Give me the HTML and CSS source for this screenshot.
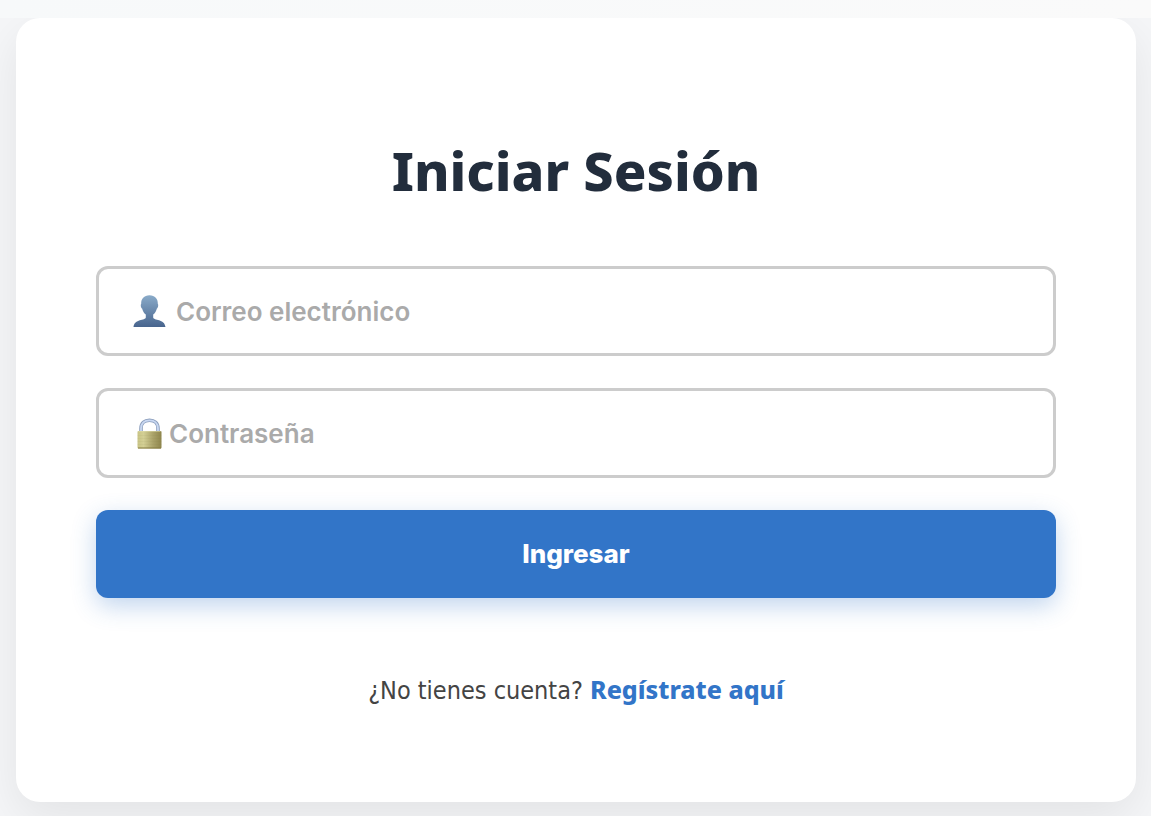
FILE: index.html
```html
<!DOCTYPE html>
<html lang="es">
<head>
<meta charset="utf-8">
<meta name="viewport" content="width=device-width, initial-scale=1">
<title>Iniciar Sesión</title>
<link rel="stylesheet" href="styles.css">
</head>
<body>
<header class="topbar"></header>
<main class="page">
  <form class="card">
    <h1 class="title">Iniciar Sesión</h1>
    <label class="field">
      <svg class="icon" viewBox="0 0 34 34" role="img" aria-label="Usuario">
        <defs><linearGradient id="person" x1="0" y1="0" x2="0" y2="1"><stop offset="0" stop-color="#8aabc9"/><stop offset="1" stop-color="#48658e"/></linearGradient></defs>
        <path fill="url(#person)" d="M16.500 1.200C11 1.200 8 4.800 8.200 9.700C7.400 10.500 7.800 13.900 9.100 14.400C9.700 17 11 19 12.800 20.500V23.400C12.500 26.600 1.200 24.600 .5 33H32.500C31.800 24.600 20.500 26.600 20.200 23.400V20.500C22 19 23.300 17 23.900 14.400C25.200 13.900 25.600 10.500 24.800 9.700C25 4.800 22 1.200 16.500 1.200Z"/>
      </svg>
      <input class="input input-email" type="email" placeholder="Correo electrónico" aria-label="Correo electrónico">
    </label>
    <label class="field">
      <svg class="icon" viewBox="0 0 34 34" role="img" aria-label="Candado">
        <defs>
          <linearGradient id="brass" x1="0" y1="0" x2="1" y2="0"><stop offset="0" stop-color="#c9c486"/><stop offset=".25" stop-color="#d3cf94"/><stop offset=".65" stop-color="#aaa269"/><stop offset="1" stop-color="#8e854c"/></linearGradient>
        </defs>
        <path fill="none" stroke="#8d9fbd" stroke-width="3.600" d="M8 17V12.500C8 7.200 11.500 4.300 16.500 4.300S25 7.200 25 12.500V17"/>
        <path fill="none" stroke="#c9d8f2" stroke-width="1.800" d="M8 17V12.500C8 7.200 11.500 4.300 16.500 4.300S25 7.200 25 12.500V17"/>
        <rect x="4.500" y="15" width="24" height="17.500" rx="1" fill="url(#brass)"/>
        <path stroke="#77713d" stroke-opacity=".06" d="M4.500 19.500H28.500M4.500 22.500H28.500M4.500 25.500H28.500M4.500 28.500H28.500"/>
        <path stroke="#e1dfae" stroke-opacity=".5" d="M5.500 15.500H27.500"/><path stroke="#857b40" d="M5 32H28"/>
      </svg>
      <input class="input" type="password" placeholder="Contraseña" aria-label="Contraseña">
    </label>
    <button class="submit" type="submit">Ingresar</button>
    <p class="signup">¿No tienes cuenta? <a class="link" href="#registro">Regístrate aquí</a></p>
  </form>
</main>
</body>
</html>
```
FILE: styles.css
```css
* { box-sizing: border-box; }
body {
  display: flex;
  flex-direction: column;
  min-height: 100vh;
  margin: 0;
  background: #f5f6f8;
  font-family: Tahoma, "Noto Sans", sans-serif;
}
.topbar {
  height: 18px;
  background: linear-gradient(90deg, #f7f9fa, #fafafa);
}
.page {
  flex: 1;
  padding: 0 15px 14px 16px;
  overflow: hidden;
}
.card {
  display: flex;
  flex-direction: column;
  padding: 112px 80px 92px;
  border-radius: 24px;
  background: #fff;
  box-shadow: 0 16px 48px rgba(0, 0, 0, .08);
}
.title {
  margin: 0 0 56px;
  color: #222d3c;
  font-size: 54px;
  font-weight: 800;
  line-height: 80px;
  text-align: center;
}
.field {
  display: flex;
  align-items: center;
  height: 90px;
  margin-bottom: 32px;
  padding: 0 34px;
  border: 3px solid #ccc;
  border-radius: 12px;
  background: #fff;
}
.icon {
  flex: none;
  width: 34px;
  height: 34px;
}
.input {
  flex: 1;
  min-width: 0;
  padding: 2px 0 0 2px;
  border: 0;
  outline: 0;
  background: transparent;
  color: #333;
  font: 600 26px/36px Inter, sans-serif;
}
.input-email { padding-left: 9px; }
.input::placeholder { color: #aaa; opacity: 1; }
.submit {
  height: 88px;
  padding: 0;
  border: 0;
  border-radius: 12px;
  background: #3275c8;
  box-shadow: 0 8px 24px rgba(50, 117, 200, .3);
  color: #fff;
  font: 800 26px/36px Inter, sans-serif;
}
.signup {
  margin: 72px 0 0;
  color: #444;
  font-family: Tahoma, "DejaVu Sans Condensed", "Noto Sans", sans-serif;
  font-size: 25px;
  line-height: 38px;
  text-align: center;
}
.link {
  color: #3275c8;
  font-family: Tahoma, "Noto Sans", sans-serif;
  font-weight: 800;
  text-decoration: none;
}
```
